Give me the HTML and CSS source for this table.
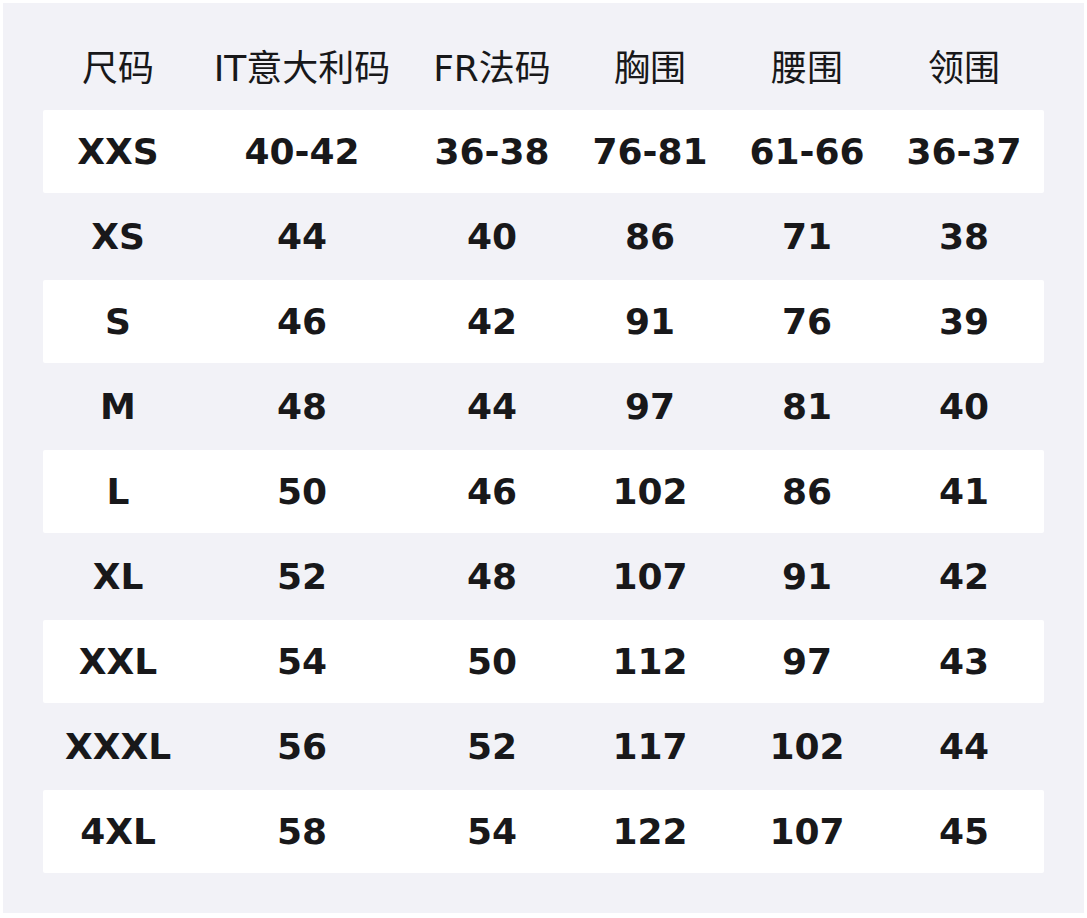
FILE: index.html
```html
<!DOCTYPE html>
<html lang="zh">
<head>
<meta charset="utf-8">
<title>尺码表</title>
<link rel="stylesheet" href="styles.css">
</head>
<body>
<div class="panel">
  <div class="row head">
    <div>尺码</div><div>IT意大利码</div><div>FR法码</div><div>胸围</div><div>腰围</div><div>领围</div>
  </div>
  <div class="row odd"><div>XXS</div><div>40-42</div><div>36-38</div><div>76-81</div><div>61-66</div><div>36-37</div></div>
  <div class="row"><div>XS</div><div>44</div><div>40</div><div>86</div><div>71</div><div>38</div></div>
  <div class="row odd"><div>S</div><div>46</div><div>42</div><div>91</div><div>76</div><div>39</div></div>
  <div class="row"><div>M</div><div>48</div><div>44</div><div>97</div><div>81</div><div>40</div></div>
  <div class="row odd"><div>L</div><div>50</div><div>46</div><div>102</div><div>86</div><div>41</div></div>
  <div class="row"><div>XL</div><div>52</div><div>48</div><div>107</div><div>91</div><div>42</div></div>
  <div class="row odd"><div>XXL</div><div>54</div><div>50</div><div>112</div><div>97</div><div>43</div></div>
  <div class="row"><div>XXXL</div><div>56</div><div>52</div><div>117</div><div>102</div><div>44</div></div>
  <div class="row odd"><div>4XL</div><div>58</div><div>54</div><div>122</div><div>107</div><div>45</div></div>
</div>
</body>
</html>
```
FILE: styles.css
```css
html, body {
  margin: 0;
  padding: 0;
  background: #ffffff;
}
body {
  padding: 3px;
  font-family: "DejaVu Sans", "Noto Sans CJK SC", sans-serif;
  color: #18181a;
}
.panel {
  width: 1081px;
  height: 910px;
  box-sizing: border-box;
  background: #f2f2f7;
  padding: 22px 40px 0 40px;
}
.row {
  display: grid;
  grid-template-columns: 150px 218px 162px 154px 160px 154px 3px;
  height: 83px;
  margin-bottom: 2px;
  align-items: center;
  font-size: 36px;
  font-weight: bold;
  border-radius: 2px;
}
.row > div {
  text-align: center;
  white-space: nowrap;
}
.row.head {
  height: 79px;
  padding-bottom: 6px;
  margin-bottom: 0;
  font-weight: normal;
}
.row.odd {
  background: #ffffff;
}
```
